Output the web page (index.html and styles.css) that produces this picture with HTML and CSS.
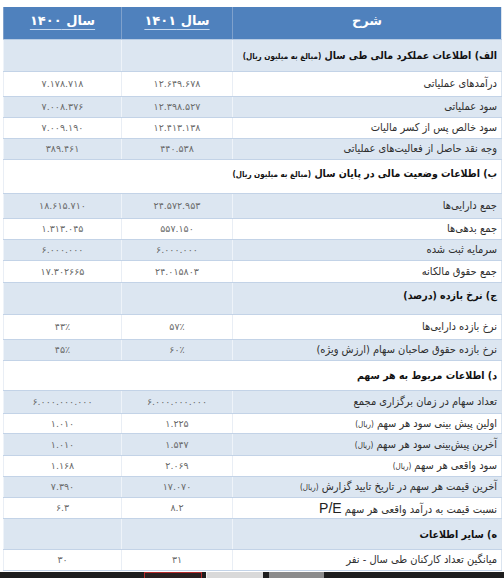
FILE: index.html
```html
<!DOCTYPE html>
<html lang="fa">
<head>
<meta charset="utf-8">
<title>خلاصه اطلاعات</title>
<link rel="stylesheet" href="styles.css">
</head>
<body>
<table class="report" dir="rtl">
  <colgroup>
    <col class="c-desc"><col class="c-y1"><col class="c-y0">
  </colgroup>
  <thead>
    <tr class="h32">
      <th>شرح</th>
      <th><span class="ul">سال ۱۴۰۱</span></th>
      <th><span class="ul">سال ۱۴۰۰</span></th>
    </tr>
  </thead>
  <tbody>
    <tr class="odd h32 sec"><td>الف) اطلاعات عملکرد مالی طی سال <small>(مبالغ به میلیون ریال)</small></td><td></td><td></td></tr>
    <tr class="h25"><td>درآمدهای عملیاتی</td><td>۱۲.۶۴۹.۶۷۸</td><td>۷.۱۷۸.۷۱۸</td></tr>
    <tr class="odd h21"><td>سود عملیاتی</td><td>۱۲.۳۹۸.۵۲۷</td><td>۷.۰۰۸.۳۷۶</td></tr>
    <tr class="h21"><td>سود خالص پس از کسر مالیات</td><td>۱۲.۴۱۳.۱۳۸</td><td>۷.۰۰۹.۱۹۰</td></tr>
    <tr class="odd h21"><td>وجه نقد حاصل از فعالیت‌های عملیاتی</td><td>۴۴۰.۵۳۸</td><td>۳۸۹.۴۶۱</td></tr>
    <tr class="h34 sec sec-high"><td colspan="3">ب) اطلاعات وضعیت مالی در پایان سال <small>(مبالغ به میلیون ریال)</small></td></tr>
    <tr class="odd h25"><td>جمع دارایی‌ها</td><td>۲۴.۵۷۲.۹۵۳</td><td>۱۸.۶۱۵.۷۱۰</td></tr>
    <tr class="h21"><td>جمع بدهی‌ها</td><td>۵۵۷.۱۵۰</td><td>۱.۳۱۳.۰۴۵</td></tr>
    <tr class="odd h21"><td>سرمایه ثبت شده</td><td>۶.۰۰۰.۰۰۰</td><td>۶.۰۰۰.۰۰۰</td></tr>
    <tr class="h22"><td>جمع حقوق مالکانه</td><td>۲۴.۰۱۵۸۰۳</td><td>۱۷.۳۰۲۶۶۵</td></tr>
    <tr class="odd h32 sec sec-high"><td>ج) نرخ بازده (درصد)</td><td></td><td></td></tr>
    <tr class="h25"><td>نرخ بازده دارایی‌ها</td><td>۵۷٪</td><td>۴۳٪</td></tr>
    <tr class="odd h21"><td>نرخ بازده حقوق صاحبان سهام (ارزش ویژه)</td><td>۶۰٪</td><td>۴۵٪</td></tr>
    <tr class="h30 sec"><td colspan="3">د) اطلاعات مربوط به هر سهم</td></tr>
    <tr class="odd h23"><td>تعداد سهام در زمان برگزاری مجمع</td><td>۶.۰۰۰.۰۰۰.۰۰۰</td><td>۶.۰۰۰.۰۰۰.۰۰۰</td></tr>
    <tr class="h20"><td>اولین پیش بینی سود هر سهم <small>(ریال)</small></td><td>۱.۲۲۵</td><td>۱.۰۱۰</td></tr>
    <tr class="odd h22"><td>آخرین پیش‌بینی سود هر سهم <small>(ریال)</small></td><td>۱.۵۴۷</td><td>۱.۰۱۰</td></tr>
    <tr class="h21"><td>سود واقعی هر سهم <small>(ریال)</small></td><td>۲.۰۶۹</td><td>۱.۱۶۸</td></tr>
    <tr class="odd h21"><td>آخرین قیمت هر سهم در تاریخ تایید گزارش <small>(ریال)</small></td><td>۱۷.۰۷۰</td><td>۷.۳۹۰</td></tr>
    <tr class="h21"><td>نسبت قیمت به درآمد واقعی هر سهم <span class="latin">P/E</span></td><td>۸.۲</td><td>۶.۳</td></tr>
    <tr class="odd h31 sec"><td>ه) سایر اطلاعات</td><td></td><td></td></tr>
    <tr class="h21"><td>میانگین تعداد کارکنان طی سال - نفر</td><td>۳۱</td><td>۳۰</td></tr>
  </tbody>
</table>
<div class="taskbar">
  <span class="tb-btn tb-red"></span>
  <span class="tb-btn tb-light"></span>
  <span class="tb-btn tb-mid"></span>
</div>
</body>
</html>
```

FILE: styles.css
```css
html, body {
  margin: 0;
  padding: 0;
  background: #ffffff;
  overflow: hidden;
}

body {
  width: 504px;
  height: 578px;
  font-family: "DejaVu Sans", "Noto Sans", sans-serif;
}

.report {
  margin: 7px 0 0 3px;
  width: 498px;
  border-collapse: collapse;
  table-layout: fixed;
  border-left: 1px solid #dbe4ef;
  border-right: 1px solid #dbe4ef;
}

.c-desc { width: 269px; }
.c-y1 { width: 111px; }
.c-y0 { width: 118px; }

.report th {
  background: #4f81bd;
  color: #ffffff;
  font-weight: bold;
  font-size: 13px;
  text-align: center;
  padding: 0 0 4px;
  border-left: 1px solid #7fa1cc;
  border-bottom: 1px solid #b8cce4;
}

.report th .ul {
  text-decoration: underline;
  text-decoration-color: #c5d9f1;
  text-underline-offset: 4px;
}

.report td {
  padding: 0;
  font-size: 9.5px;
  color: #6a6a6a;
  text-align: center;
  vertical-align: middle;
  border-bottom: 1px solid #c3d3e7;
  border-left: 1px solid #e9eef5;
  white-space: nowrap;
  overflow: visible;
}

.report td:first-child {
  text-align: right;
  padding-right: 4px;
  font-family: "DejaVu Sans Condensed", "DejaVu Sans", sans-serif;
  font-stretch: condensed;
  font-size: 11px;
  color: #2e2e2e;
}

.report tr.odd td {
  background: #dce6f1;
  border-left-color: #eef3f9;
}

.report tr.sec td:first-child {
  font-weight: bold;
  font-size: 10.5px;
  color: #111111;
}

.report td small {
  font-size: 8px;
}

.report tr.sec-high td {
  padding-bottom: 6px;
}

.latin {
  font-family: "Liberation Sans", Arial, sans-serif;
  font-stretch: normal;
  font-size: 14px;
  color: #222222;
}

.h20 { height: 20px; }
.h21 { height: 21px; }
.h22 { height: 22px; }
.h23 { height: 23px; }
.h25 { height: 25px; }
.h30 { height: 30px; }
.h31 { height: 31px; }
.h32 { height: 32px; }
.h34 { height: 34px; }

.taskbar {
  margin-top: 1px;
  height: 8px;
  background: #1e1e1e;
  display: flex;
  align-items: flex-start;
  padding-left: 144px;
  gap: 4px;
}

.tb-btn {
  display: block;
  height: 8px;
  box-sizing: border-box;
}

.tb-red {
  width: 58px;
  border: 1px solid #b42a2a;
  border-bottom: none;
  background: #2a2020;
}

.tb-light {
  width: 57px;
  background: #d9d9d9;
  border-left: 1px solid #f2f2f2;
}

.tb-mid {
  width: 57px;
  background: #8c8c8c;
  border-left: 2px solid #1e1e1e;
}
```
